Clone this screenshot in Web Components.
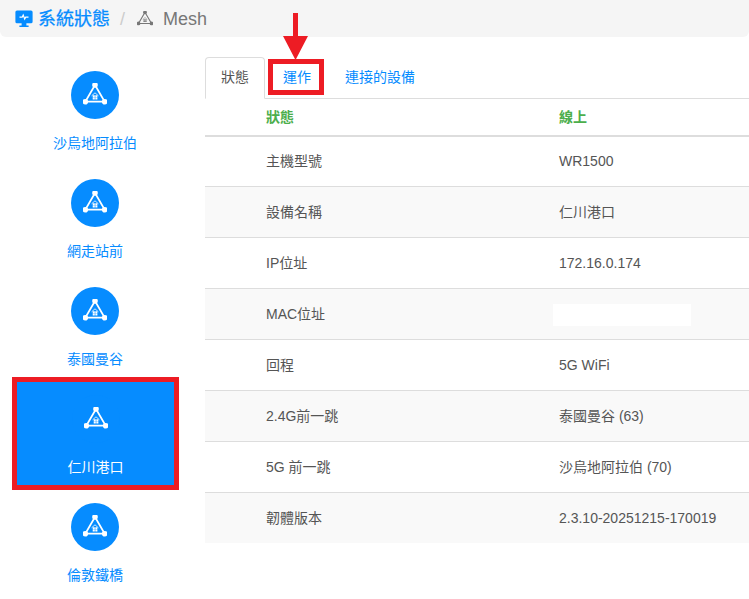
<!DOCTYPE html>
<html lang="zh-Hant">
    <head>
        <meta charset="utf-8">
        <title>Mesh</title>
        <style>
            html, body {
                margin: 0;
                height: 100%;
                overflow: hidden;
                background: #fff;
                font-family: "Liberation Sans", "Noto Sans CJK TC", sans-serif;
                font-size: 14px;
                color: #555;
            }
        </style>
    </head>

    <body>

        <mesh-page>
            <bread-crumb slot="top" title-text="系統狀態" current="Mesh"></bread-crumb>

            <node-list slot="side">
                <mesh-node>沙烏地阿拉伯</mesh-node>
                <mesh-node>網走站前</mesh-node>
                <mesh-node>泰國曼谷</mesh-node>
                <mesh-node selected>仁川港口</mesh-node>
                <mesh-node>倫敦鐵橋</mesh-node>
            </node-list>

            <div slot="main">
                <tab-bar>
                    <tab-item active>狀態</tab-item>
                    <tab-item marked>運作</tab-item>
                    <tab-item>連接的設備</tab-item>
                </tab-bar>
                <status-table>
                    <status-row head label="狀態" value="線上"></status-row>
                    <status-row first label="主機型號" value="WR1500"></status-row>
                    <status-row label="設備名稱" value="仁川港口" striped></status-row>
                    <status-row label="IP位址" value="172.16.0.174"></status-row>
                    <status-row label="MAC位址" value="" masked striped></status-row>
                    <status-row label="回程" value="5G WiFi"></status-row>
                    <status-row label="2.4G前一跳" value="泰國曼谷 (63)" striped></status-row>
                    <status-row label="5G 前一跳" value="沙烏地阿拉伯 (70)"></status-row>
                    <status-row label="韌體版本" value="2.3.10-20251215-170019" striped last></status-row>
                </status-table>
            </div>
        </mesh-page>

        <!-- - - - - - - - - - - - - - - - - - - - - - - - - -->

        <template id="mesh-page-template">
            <style>
                :host {
                    display: block;
                }
                .body {
                    display: flex;
                }
                .side {
                    width: 190px;
                    flex: none;
                    padding-top: 17px;
                }
                .main {
                    flex: 1;
                    min-width: 0;
                    margin-left: 15px;
                    padding-top: 20px;
                }
            </style>
            <slot name="top"></slot>
            <div class="body">
                <div class="side"><slot name="side"></slot></div>
                <div class="main"><slot name="main"></slot></div>
            </div>
        </template>

        <template id="bread-crumb-template">
            <style>
                :host {
                    display: flex;
                    align-items: center;
                    height: 37px;
                    padding: 0 0 0 15px;
                    background: #f5f5f5;
                    border-radius: 0 0 6px 6px;
                    font-size: 18px;
                    line-height: 24px;
                    box-sizing: border-box;
                }
                .root {
                    display: flex;
                    align-items: center;
                    color: #068cff;
                    -webkit-text-stroke: .25px #068cff;
                }
                .root svg {
                    width: 18px;
                    height: 18px;
                    margin-right: 5px;
                }
                .sep {
                    color: #ccc;
                    margin: 0 12px 0 10px;
                }
                .current {
                    display: flex;
                    align-items: center;
                    color: #777;
                }
                mesh-icon {
                    color: #777;
                    width: 16px;
                    height: 16px;
                    margin-right: 10px;
                }
            </style>
            <span class="root">
                <svg viewBox="0 0 18 18">
                    <path fill="#068cff" d="M2 .5h14a1.600 1.600 0 0 1 1.600 1.600v9.600a1.600 1.600 0 0 1-1.600 1.600h-4.600v2.200h2.200v1.600H4.400v-1.600h2.200v-2.200H2A1.600 1.600 0 0 1 .4 11.700V2.100A1.600 1.600 0 0 1 2 .5z"/>
                    <path fill="none" stroke="#fff" stroke-width="1.200" d="M4.500 7.200h2.700l1-2.200 1.500 4 1-1.800h2.800"/>
                </svg>
                <span class="root-text"></span>
            </span>
            <span class="sep">/</span>
            <span class="current"><mesh-icon></mesh-icon><span class="current-text"></span></span>
        </template>

        <template id="mesh-icon-template">
            <style>
                :host {
                    display: inline-block;
                    width: 24px;
                    height: 24px;
                    color: #fff;
                }
                svg {
                    display: block;
                    width: 100%;
                    height: 100%;
                }
            </style>
            <svg viewBox="0 0 24 24">
                <path fill="none" stroke="currentColor" stroke-width="1.700" d="M12 2 2.300 18.700h19.400z"/>
                <circle cx="12" cy="2" r="2.800" fill="currentColor"/>
                <circle cx="2.300" cy="18.700" r="2.800" fill="currentColor"/>
                <circle cx="21.700" cy="18.700" r="2.800" fill="currentColor"/>
                <path fill="none" stroke="currentColor" stroke-width=".8" d="M8.600 12.800 12 9.800l3.400 3"/>
                <path fill="currentColor" d="M9.700 12.200h2.100v2h-2.100zM12.300 12.200h2.100v2h-2.100zM9.700 14.600h2.100v2h-2.100zM12.300 14.600h2.100v2h-2.100z"/>
            </svg>
        </template>

        <template id="node-list-template">
            <style>
                :host {
                    display: block;
                }
            </style>
            <slot></slot>
        </template>

        <template id="mesh-node-template">
            <style>
                :host {
                    display: flex;
                    flex-direction: column;
                    align-items: center;
                    height: 108px;
                    box-sizing: border-box;
                    padding-top: 17px;
                    color: #068cff;
                }
                .circle {
                    width: 48px;
                    height: 48px;
                    border-radius: 50%;
                    background: #068cff;
                    display: flex;
                    align-items: center;
                    justify-content: center;
                }
                .label {
                    margin-top: 14px;
                    line-height: 20px;
                    font-size: 14px;
                }
                :host([selected]) {
                    background: #068cff;
                    color: #fff;
                    height: 103px;
                    padding-top: 13px;
                    margin: 4px 16px 1px 17px;
                    outline: 5px solid #ed1c24;
                }
            </style>
            <div class="circle"><mesh-icon></mesh-icon></div>
            <div class="label"><slot></slot></div>
        </template>

        <template id="tab-bar-template">
            <style>
                :host {
                    display: flex;
                    height: 42px;
                    box-sizing: border-box;
                    border-bottom: 1px solid #ddd;
                }
            </style>
            <slot></slot>
        </template>

        <template id="tab-item-template">
            <style>
                :host {
                    display: block;
                    height: 42px;
                    box-sizing: border-box;
                    padding: 9px 15px 0;
                    margin-right: 3px;
                    line-height: 20px;
                    color: #068cff;
                    border: 1px solid transparent;
                    border-radius: 4px 4px 0 0;
                    position: relative;
                }
                :host([active]) {
                    color: #555;
                    background: #fff;
                    border-color: #ddd #ddd #fff;
                }
                :host([marked]) {
                    padding-left: 14px;
                    padding-right: 14px;
                }
                .box, .arrow {
                    display: none;
                }
                :host([marked]) .box {
                    display: block;
                    position: absolute;
                    left: -1px;
                    top: 1px;
                    width: 46px;
                    height: 26px;
                    border: 5px solid #ed1c24;
                }
                :host([marked]) .arrow {
                    display: block;
                    position: absolute;
                    left: 14px;
                    top: -45px;
                    width: 25px;
                    height: 47px;
                }
            </style>
            <slot></slot>
            <span class="box"></span>
            <svg class="arrow" viewBox="0 0 25 47">
                <path fill="#ed1c24" d="M10 0h5v23h10L12.500 47 0 23h10z"/>
            </svg>
        </template>

        <template id="status-table-template">
            <style>
                :host {
                    display: block;
                }
            </style>
            <slot></slot>
        </template>

        <template id="status-row-template">
            <style>
                :host {
                    display: grid;
                    grid-template-columns: 293px 1fr;
                    align-items: center;
                    height: 51px;
                    box-sizing: border-box;
                    padding-left: 61px;
                    border-bottom: 1px solid #ddd;
                    color: #555;
                    line-height: 20px;
                }
                :host([first]) {
                    height: 50px;
                    padding-bottom: 1px;
                }
                :host([striped]) {
                    background: #f9f9f9;
                }
                :host([last]) {
                    height: 50px;
                    border-bottom: 0;
                }
                :host([head]) {
                    height: 38px;
                    border-bottom-width: 2px;
                    color: #4cae4c;
                    font-weight: 700;
                }
                .value {
                    position: relative;
                    min-height: 20px;
                }
                .mask {
                    display: none;
                }
                :host([masked]) .mask {
                    display: block;
                    position: absolute;
                    left: -6px;
                    top: 0;
                    width: 138px;
                    height: 22px;
                    background: #fff;
                }
            </style>
            <div class="label"></div>
            <div class="value"><span class="value-text"></span><span class="mask"></span></div>
        </template>

        <script>

            // clones a template into an open shadow root
            class TemplatedElement extends HTMLElement {
                constructor(templateId) {
                    super()
                    var shadow = this.attachShadow({mode: 'open'})
                    var template = document.getElementById(templateId)
                    shadow.appendChild(template.content.cloneNode(true))
                }
            }

            class MeshPage extends TemplatedElement {
                constructor() { super('mesh-page-template') }
            }
            class MeshIcon extends TemplatedElement {
                constructor() { super('mesh-icon-template') }
            }
            class NodeList extends TemplatedElement {
                constructor() { super('node-list-template') }
            }
            class MeshNode extends TemplatedElement {
                constructor() { super('mesh-node-template') }
            }
            class TabBar extends TemplatedElement {
                constructor() { super('tab-bar-template') }
            }
            class TabItem extends TemplatedElement {
                constructor() { super('tab-item-template') }
            }
            class StatusTable extends TemplatedElement {
                constructor() { super('status-table-template') }
            }

            class BreadCrumb extends TemplatedElement {
                constructor() { super('bread-crumb-template') }
                connectedCallback() {
                    this.shadowRoot.querySelector('.root-text').textContent = this.getAttribute('title-text')
                    this.shadowRoot.querySelector('.current-text').textContent = this.getAttribute('current')
                }
            }

            class StatusRow extends TemplatedElement {
                constructor() { super('status-row-template') }
                connectedCallback() {
                    this.shadowRoot.querySelector('.label').textContent = this.getAttribute('label')
                    this.shadowRoot.querySelector('.value-text').textContent = this.getAttribute('value')
                }
            }

            customElements.define('mesh-icon', MeshIcon)
            customElements.define('mesh-page', MeshPage)
            customElements.define('bread-crumb', BreadCrumb)
            customElements.define('node-list', NodeList)
            customElements.define('mesh-node', MeshNode)
            customElements.define('tab-bar', TabBar)
            customElements.define('tab-item', TabItem)
            customElements.define('status-table', StatusTable)
            customElements.define('status-row', StatusRow)

        </script>

    </body>
</html>
